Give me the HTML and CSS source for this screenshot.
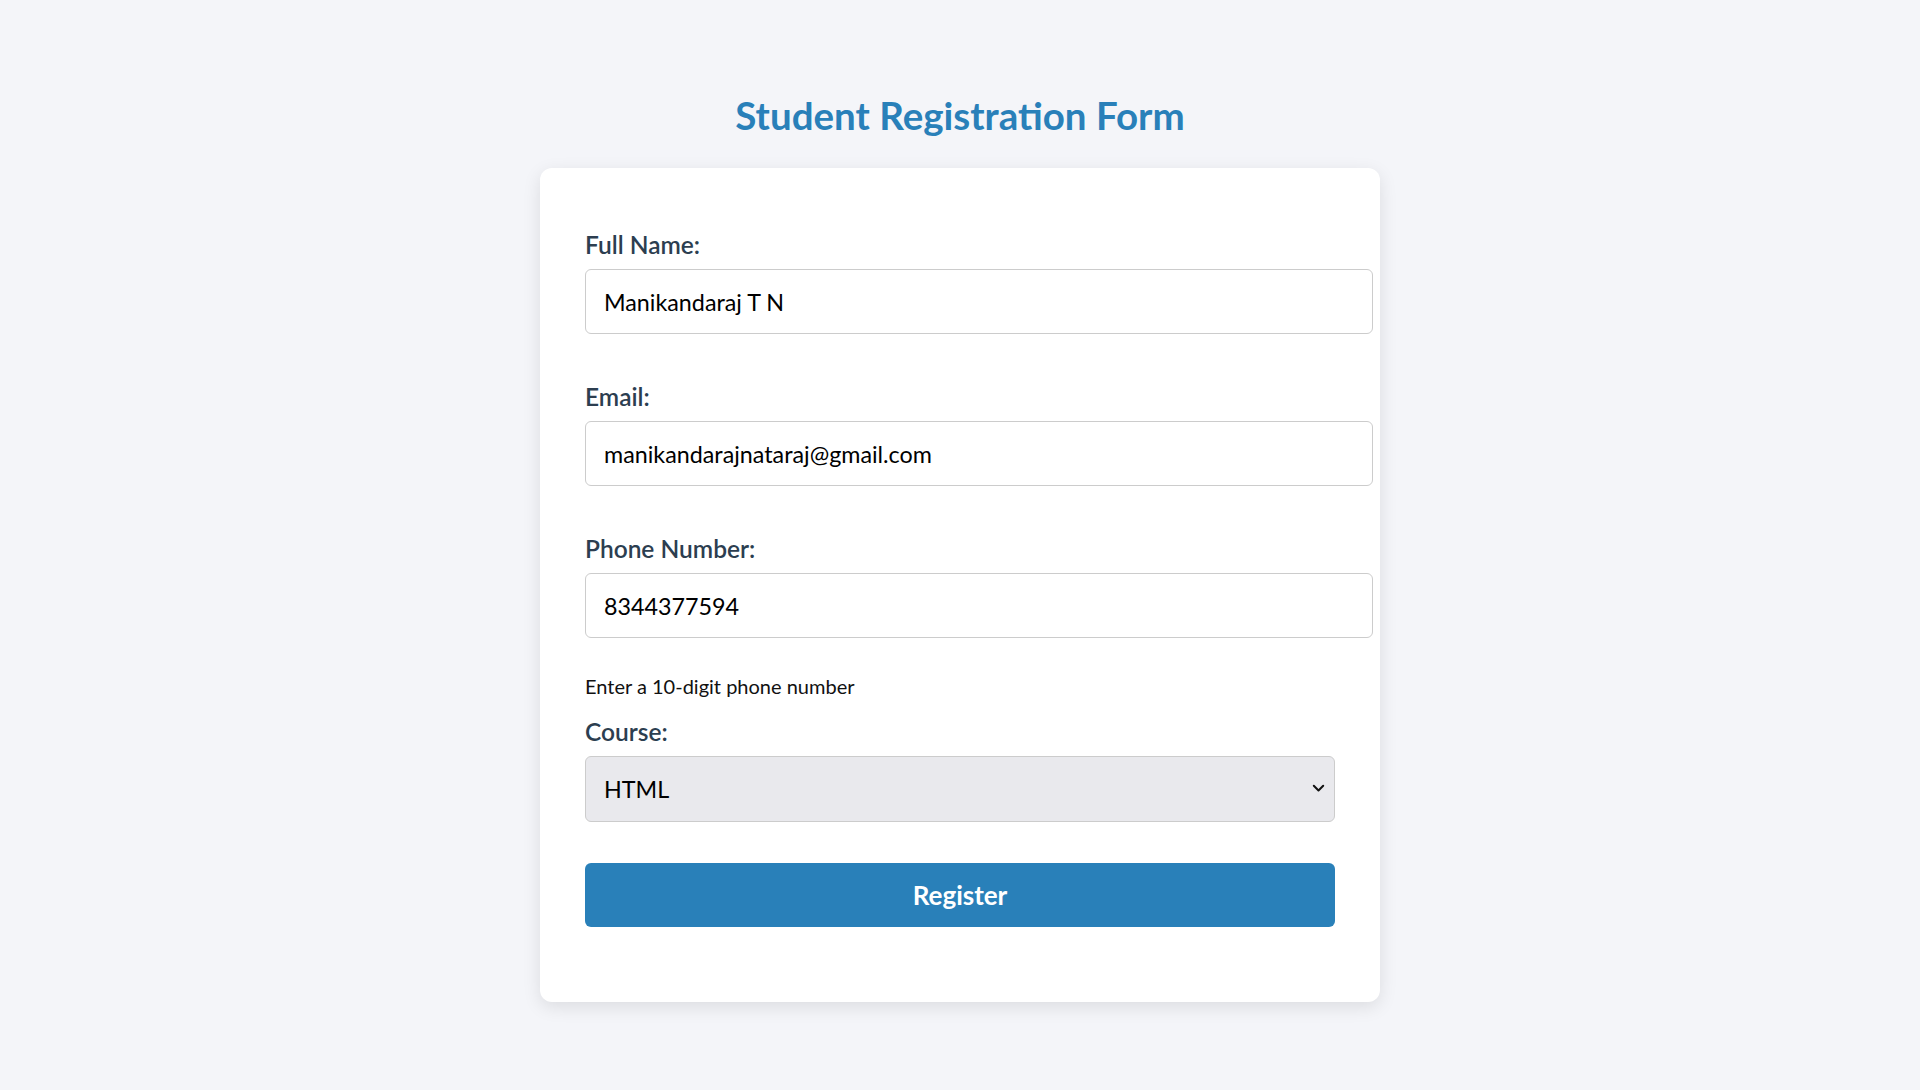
FILE: index.html
```html
<!DOCTYPE html>
<html lang="en">
<head>
<meta charset="utf-8">
<title>Student Registration Form</title>
<link rel="stylesheet" href="styles.css">
</head>
<body>
<main class="page">
  <h1 class="title">Student Registration Form</h1>
  <form class="card">
    <label class="label" for="name">Full Name:</label>
    <input class="input" id="name" type="text" value="Manikandaraj T N">

    <label class="label" for="email">Email:</label>
    <input class="input" id="email" type="email" value="manikandarajnataraj@gmail.com">

    <label class="label" for="phone">Phone Number:</label>
    <input class="input" id="phone" type="tel" value="8344377594">
    <p class="help">Enter a 10-digit phone number</p>

    <label class="label" for="course">Course:</label>
    <div class="select-wrap">
      <select class="select" id="course">
        <option>HTML</option>
        <option>CSS</option>
        <option>JavaScript</option>
      </select>
      <svg class="chevron" width="13" height="9" viewBox="0 0 13 9" aria-hidden="true">
        <path d="M1.8 1.8 L6.5 6.5 L11.2 1.8" fill="none" stroke="#111" stroke-width="2" stroke-linecap="round" stroke-linejoin="round"/>
      </svg>
    </div>

    <button class="btn" type="button">Register</button>
  </form>
</main>
</body>
</html>
```

FILE: styles.css
```css
html, body {
  margin: 0;
  padding: 0;
}

body {
  background: #f4f5f9;
  font-family: "Segoe UI", Lato, "Open Sans", sans-serif;
  min-height: 1090px;
}

.page {
  display: flex;
  flex-direction: column;
  align-items: center;
  padding-top: 95px;
}

.title {
  margin: 0;
  font-size: 38.5px;
  line-height: 40px;
  font-weight: 700;
  color: #2980b9;
}

.card {
  display: flex;
  flex-direction: column;
  align-items: flex-start;
  margin-top: 33px;
  width: 840px;
  box-sizing: border-box;
  padding: 45px;
  background: #ffffff;
  border-radius: 12px;
  box-shadow: 0 5px 18px rgba(0, 0, 0, 0.1);
}

.label {
  display: block;
  margin: 17px 0 9px;
  font-size: 24.5px;
  line-height: 30px;
  font-weight: 600;
  color: #2c3e50;
}

.input {
  display: block;
  flex: none;
  width: 788px;
  height: 65px;
  box-sizing: border-box;
  margin: 0 0 31px;
  padding: 0 18px;
  border: 1px solid #cccccc;
  border-radius: 6px;
  background: #ffffff;
  font-family: inherit;
  font-size: 23.3px;
  color: #000000;
  outline: none;
}

.help {
  margin: 4px 0 0;
  font-size: 20px;
  line-height: 27px;
  color: #111111;
}

.select-wrap {
  position: relative;
  width: 750px;
}

.select {
  display: block;
  width: 750px;
  height: 66px;
  box-sizing: border-box;
  padding: 0 18px;
  border: 1px solid #cccccc;
  border-radius: 6px;
  background: #e9e9ed;
  font-family: inherit;
  font-size: 23.3px;
  color: #000000;
  appearance: none;
  -webkit-appearance: none;
  outline: none;
}

.chevron {
  position: absolute;
  right: 10px;
  top: 28px;
  pointer-events: none;
}

.btn {
  display: block;
  width: 750px;
  height: 64px;
  margin: 41px 0 30px;
  border: none;
  border-radius: 6px;
  background: #2980b9;
  color: #ffffff;
  font-family: inherit;
  font-size: 26px;
  font-weight: 700;
  cursor: pointer;
}
```
